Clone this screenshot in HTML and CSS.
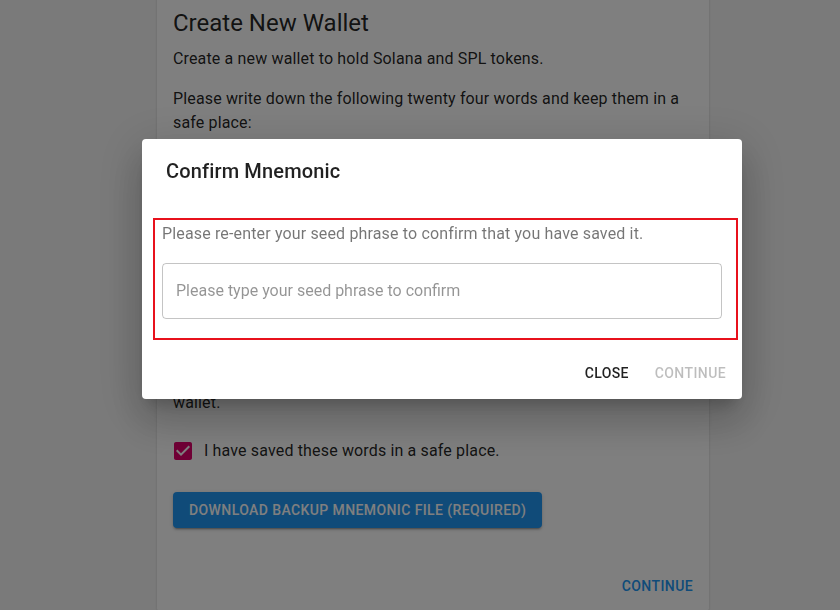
FILE: index.html
```html
<!DOCTYPE html>
<html lang="en">
<head>
<meta charset="utf-8">
<title>Create New Wallet</title>
<link rel="stylesheet" href="styles.css">
</head>
<body>
<main class="page">
  <section class="card">
    <div class="card-content">
      <h1 class="title">Create New Wallet</h1>
      <p class="body">Create a new wallet to hold Solana and SPL tokens.</p>
      <p class="body">Please write down the following twenty four words and keep them in a safe place:</p>
      <div class="mnemonic">
        <span class="mnemonic-label">Mnemonic</span>
        <p class="mnemonic-words">hidden words go here behind the dialog and are not visible in the picture at all</p>
      </div>
      <p class="body notice">Your private keys are only stored on your current computer or device. You will need these words to restore your<br>wallet.</p>
      <label class="check-row">
        <span class="check-box">
          <svg viewBox="0 0 24 24" width="24" height="24"><path fill="currentColor" d="M19 3H5c-1.11 0-2 .9-2 2v14c0 1.1.89 2 2 2h14c1.11 0 2-.9 2-2V5c0-1.1-.89-2-2-2zm-9 14l-5-5 1.41-1.41L10 14.17l7.59-7.59L19 8l-9 9z"/></svg>
        </span>
        <span class="check-label">I have saved these words in a safe place.</span>
      </label>
      <button class="btn-contained" type="button">Download Backup Mnemonic File (Required)</button>
    </div>
    <div class="card-actions">
      <button class="btn-text primary" type="button">Continue</button>
    </div>
  </section>
</main>

<div class="backdrop"></div>

<div class="dialog" role="dialog">
  <h2 class="dialog-title">Confirm Mnemonic</h2>
  <div class="dialog-content">
    <div class="highlight">
      <p class="dialog-text">Please re-enter your seed phrase to confirm that you have saved it.</p>
      <div class="input">
        <input type="text" placeholder="Please type your seed phrase to confirm">
      </div>
    </div>
  </div>
  <div class="dialog-actions">
    <button class="btn-text" type="button">Close</button>
    <button class="btn-text disabled" type="button">Continue</button>
  </div>
</div>
</body>
</html>
```
FILE: styles.css
```css
* { box-sizing: border-box; }
html, body { margin: 0; padding: 0; }
body {
  background: #f5f5f5;
  font-family: Roboto, "Liberation Sans", sans-serif;
  color: rgba(0,0,0,0.87);
  width: 840px;
  height: 610px;
  overflow: hidden;
}
.page {
  padding-left: 157px;
}
.card {
  width: 552px;
  margin-top: -9px;
  background: #fff;
  border-radius: 4px;
  box-shadow: 0 2px 1px -1px rgba(0,0,0,0.2), 0 1px 1px 0 rgba(0,0,0,0.14), 0 1px 3px 0 rgba(0,0,0,0.12);
}
.card-content {
  padding: 16px 16px 0 16px;
}
.title {
  margin: 0 0 8px 0;
  font-size: 24px;
  font-weight: 400;
  line-height: 32px;
}
.body {
  margin: 0 0 16px 0;
  font-size: 16px;
  line-height: 24px;
  letter-spacing: 0.00938em;
}
.mnemonic {
  height: 176px;
  border: 1px solid rgba(0,0,0,0.23);
  border-radius: 4px;
  padding: 16px 14px;
  margin: 0 0 16px 0;
}
.mnemonic-label { font-size: 12px; color: rgba(0,0,0,0.54); }
.mnemonic-words { margin: 4px 0 0; font-size: 16px; }
.notice { margin-bottom: 15px; }
.check-row {
  display: flex;
  align-items: center;
  margin-left: -11px;
  height: 42px;
}
.check-box {
  width: 42px;
  height: 42px;
  display: flex;
  align-items: center;
  justify-content: center;
  color: #e0006b;
}
.check-box svg { display: block; }
.check-label {
  font-size: 16px;
  line-height: 24px;
  letter-spacing: 0.00938em;
}
.btn-contained {
  margin-top: 20px;
  height: 36px;
  padding: 6px 16px;
  border: 0;
  border-radius: 4px;
  background: #2196f3;
  color: #fff;
  font-family: inherit;
  font-size: 14px;
  font-weight: 500;
  letter-spacing: 0.02857em;
  text-transform: uppercase;
  box-shadow: 0 3px 1px -2px rgba(0,0,0,0.2), 0 2px 2px 0 rgba(0,0,0,0.14), 0 1px 5px 0 rgba(0,0,0,0.12);
}
.card-actions {
  display: flex;
  justify-content: flex-end;
  padding: 40px 8px 8px 8px;
}
.btn-text {
  min-width: 64px;
  height: 36px;
  padding: 6px 8px;
  border: 0;
  background: transparent;
  font-family: inherit;
  font-size: 14px;
  font-weight: 500;
  letter-spacing: 0.02857em;
  text-transform: uppercase;
  color: rgba(0,0,0,0.87);
  border-radius: 4px;
}
.btn-text.primary { color: #2196f3; }
.btn-text.disabled { color: rgba(0,0,0,0.26); }
.backdrop {
  position: fixed;
  inset: 0;
  background: rgba(0,0,0,0.5);
}
.dialog {
  position: fixed;
  left: 142px;
  top: 139px;
  width: 600px;
  background: #fff;
  border-radius: 4px;
  box-shadow: 0 11px 15px -7px rgba(0,0,0,0.2), 0 24px 38px 3px rgba(0,0,0,0.14), 0 9px 46px 8px rgba(0,0,0,0.12);
}
.dialog-title {
  margin: 0;
  padding: 16px 24px;
  font-size: 20px;
  font-weight: 500;
  line-height: 32px;
  letter-spacing: 0.0075em;
}
.dialog-content {
  padding: 15px 4px 7px 11px;
}
.highlight {
  border: 2px solid #e8111c;
  padding: 2px 14px 19px 7px;
}
.dialog-text {
  margin: 0 0 17px 0;
  font-size: 16px;
  line-height: 24px;
  letter-spacing: 0.00938em;
  color: rgba(0,0,0,0.54);
}
.input {
  height: 56px;
  border: 1px solid rgba(0,0,0,0.23);
  border-radius: 4px;
  display: flex;
  align-items: center;
  padding-bottom: 1px;
}
.input input {
  width: 100%;
  border: 0;
  outline: 0;
  background: transparent;
  padding: 0 13px;
  font-family: inherit;
  font-size: 16px;
  color: rgba(0,0,0,0.87);
}
.input input::placeholder {
  color: rgba(0,0,0,0.42);
  opacity: 1;
}
.dialog-actions {
  display: flex;
  justify-content: flex-end;
  gap: 8px;
  padding: 8px;
}
```
